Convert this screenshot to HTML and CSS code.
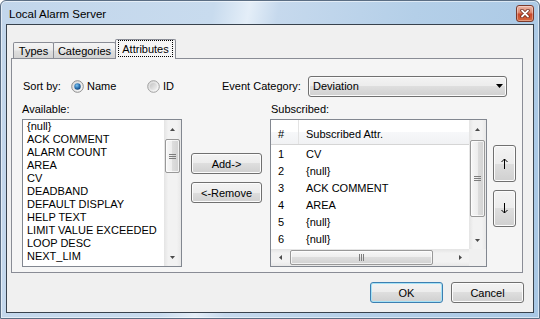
FILE: index.html
```html
<!DOCTYPE html>
<html>
<head>
<meta charset="utf-8">
<title>Local Alarm Server</title>
<link rel="stylesheet" href="styles.css">
</head>
<body>
<div class="window">
  <div class="titlebar">
    <span class="title">Local Alarm Server</span>
    <div class="close">
      <svg width="10" height="9" viewBox="0 0 10 9"><path d="M2 1.5L8 7.5M8 1.5L2 7.5" stroke="#6b2416" stroke-width="3.4" stroke-linecap="round"/><path d="M2 1.5L8 7.5M8 1.5L2 7.5" stroke="#fff" stroke-width="1.8" stroke-linecap="round"/></svg>
    </div>
  </div>
  <div class="client">
    <div class="tabs">
      <div class="tab t1">Types</div>
      <div class="tab t2">Categories</div>
      <div class="tab sel"><span class="focus">Attributes</span></div>
    </div>
    <div class="panel">
      <div class="sortrow">
        <span class="w-sort">Sort by:</span>
        <span class="radio">
          <svg width="13" height="13" viewBox="0 0 13 13"><defs><linearGradient id="rg1" x1="0" y1="0" x2="1" y2="1"><stop offset="0" stop-color="#d6d6d6"/><stop offset="1" stop-color="#fdfdfd"/></linearGradient><radialGradient id="rd1" cx="0.4" cy="0.35" r="0.75"><stop offset="0" stop-color="#7cc4f0"/><stop offset="0.55" stop-color="#2a70b0"/><stop offset="1" stop-color="#0b3768"/></radialGradient></defs><circle cx="6.5" cy="6.5" r="5.8" fill="url(#rg1)" stroke="#8c8c8c"/><circle cx="6.5" cy="6.5" r="3.2" fill="url(#rd1)"/></svg>
        </span>
        <span class="w-name">Name</span>
        <span class="radio">
          <svg width="13" height="13" viewBox="0 0 13 13"><defs><linearGradient id="rg2" x1="0" y1="0" x2="1" y2="1"><stop offset="0" stop-color="#d6d6d6"/><stop offset="1" stop-color="#fdfdfd"/></linearGradient><linearGradient id="rd2" x1="0" y1="0" x2="1" y2="1"><stop offset="0" stop-color="#c4c4c4"/><stop offset="1" stop-color="#f2f2f2"/></linearGradient></defs><circle cx="6.5" cy="6.5" r="5.8" fill="url(#rg2)" stroke="#a0a0a0"/><circle cx="6.5" cy="6.5" r="3.6" fill="url(#rd2)"/></svg>
        </span>
        <span class="w-id">ID</span>
        <span class="w-cat">Event Category:</span>
        <div class="combo">
          <span>Deviation</span>
          <svg class="combo-arrow" width="7" height="4" viewBox="0 0 7 4"><polygon points="0,0 7,0 3.5,4" fill="#000"/></svg>
        </div>
      </div>
      <div class="labelrow">
        <span class="w-avail">Available:</span>
        <span>Subscribed:</span>
      </div>
      <div class="listrow">
        <div class="listbox">
          <ul class="items">
            <li>{null}</li>
            <li>ACK COMMENT</li>
            <li>ALARM COUNT</li>
            <li>AREA</li>
            <li>CV</li>
            <li>DEADBAND</li>
            <li>DEFAULT DISPLAY</li>
            <li>HELP TEXT</li>
            <li>LIMIT VALUE EXCEEDED</li>
            <li>LOOP DESC</li>
            <li>NEXT_LIM</li>
          </ul>
          <div class="vsb">
            <div class="arrow"><svg width="7" height="4" viewBox="0 0 7 4"><polygon points="1,4 6,4 3.5,1" fill="#4a4a4a"/></svg></div>
            <div class="track">
              <div class="vthumb thumb-a"><svg width="7" height="5" viewBox="0 0 7 5"><path d="M0 0.5H7M0 2.5H7M0 4.5H7" stroke="#7d7d7d"/></svg></div>
            </div>
            <div class="arrow"><svg width="7" height="4" viewBox="0 0 7 4"><polygon points="1,0 6,0 3.5,3" fill="#4a4a4a"/></svg></div>
          </div>
        </div>
        <div class="midcol">
          <button class="btn">Add-&gt;</button>
          <button class="btn">&lt;-Remove</button>
        </div>
        <div class="listview">
          <div class="lv-main">
            <div class="lv-body">
              <div class="lv-head">
                <span class="col-n">#</span>
                <span class="col-a">Subscribed Attr.</span>
              </div>
              <div class="lv-row"><span class="n">1</span><span class="a">CV</span></div>
              <div class="lv-row"><span class="n">2</span><span class="a">{null}</span></div>
              <div class="lv-row"><span class="n">3</span><span class="a">ACK COMMENT</span></div>
              <div class="lv-row"><span class="n">4</span><span class="a">AREA</span></div>
              <div class="lv-row"><span class="n">5</span><span class="a">{null}</span></div>
              <div class="lv-row"><span class="n">6</span><span class="a">{null}</span></div>
            </div>
            <div class="vsb">
              <div class="arrow"><svg width="7" height="4" viewBox="0 0 7 4"><polygon points="1,4 6,4 3.5,1" fill="#4a4a4a"/></svg></div>
              <div class="track">
                <div class="vthumb thumb-b"><svg width="7" height="5" viewBox="0 0 7 5"><path d="M0 0.5H7M0 2.5H7M0 4.5H7" stroke="#7d7d7d"/></svg></div>
              </div>
              <div class="arrow"><svg width="7" height="4" viewBox="0 0 7 4"><polygon points="1,0 6,0 3.5,3" fill="#4a4a4a"/></svg></div>
            </div>
          </div>
          <div class="lv-bottom">
            <div class="hsb">
              <div class="harrow"><svg width="4" height="7" viewBox="0 0 4 7"><polygon points="4,1 4,6 1,3.5" fill="#4a4a4a"/></svg></div>
              <div class="htrack">
                <div class="hthumb"><svg width="5" height="7" viewBox="0 0 5 7"><path d="M0.5 0V7M2.5 0V7M4.5 0V7" stroke="#7d7d7d"/></svg></div>
              </div>
              <div class="harrow"><svg width="4" height="7" viewBox="0 0 4 7"><polygon points="0,1 0,6 3,3.5" fill="#4a4a4a"/></svg></div>
            </div>
            <div class="corner"></div>
          </div>
        </div>
        <div class="updown">
          <button class="btn tall"><svg width="7" height="11" viewBox="0 0 7 11"><path d="M3.5 1V11M0.5 4L3.5 1L6.5 4" stroke="#000" fill="none"/></svg></button>
          <button class="btn tall"><svg width="7" height="11" viewBox="0 0 7 11"><path d="M3.5 0V10M0.5 7L3.5 10L6.5 7" stroke="#000" fill="none"/></svg></button>
        </div>
      </div>
    </div>
    <div class="footer">
      <button class="btn fbtn def">OK</button>
      <button class="btn fbtn">Cancel</button>
    </div>
  </div>
</div>
</body>
</html>
```

FILE: styles.css
```css
* { box-sizing: border-box; margin: 0; padding: 0; }
html, body { width: 540px; height: 319px; overflow: hidden; }
body {
  font-family: "Liberation Sans", Arial, sans-serif;
  font-size: 11px;
  color: #000;
  background: #fff;
}

.window {
  width: 540px;
  height: 319px;
  border: 1px solid #5b6e84;
  border-radius: 6px 6px 0 0;
  background: linear-gradient(100deg, #c2d6eb 0%, #c8dbee 36%, #e4eef8 42%, #c6d9ed 47%, #b4cfe8 70%, #a9c8e5 100%);
  box-shadow: inset 0 0 0 1px rgba(255, 255, 255, 0.55);
  padding: 0 5px 5px;
  display: flex;
  flex-direction: column;
}

.titlebar {
  height: 23px;
  display: flex;
  align-items: flex-start;
  flex: none;
}
.title {
  font-size: 11.5px;
  line-height: 14px;
  padding: 6px 0 0 3px;
}
.close {
  margin-left: auto;
  margin-top: 4px;
  width: 18px;
  height: 17px;
  border: 1px solid #7b3a2c;
  border-radius: 3px;
  background: linear-gradient(#ebb4a5 0%, #de8c74 42%, #c9472b 55%, #d4693f 100%);
  box-shadow: inset 0 0 0 1px rgba(255, 255, 255, 0.35);
  display: flex;
  align-items: center;
  justify-content: center;
}

.client {
  flex: 1;
  border: 1px solid #38424d;
  background: #f0f0f0;
  padding: 17px 10px 0 4px;
  display: flex;
  flex-direction: column;
}

.tabs {
  height: 16px;
  flex: none;
  display: flex;
  align-items: flex-end;
  padding-left: 2px;
  position: relative;
  z-index: 1;
}
.tab {
  height: 16px;
  border: 1px solid #898c95;
  border-bottom: 0;
  border-radius: 2px 2px 0 0;
  background: linear-gradient(#f5f5f5 0%, #ececec 45%, #dedede 55%, #d3d3d3 100%);
  display: flex;
  align-items: center;
  justify-content: center;
  padding-top: 1px;
}
.tab + .tab { margin-left: -1px; }
.t1 { width: 41px; }
.t2 { width: 63px; }
.tab.sel {
  width: 61px;
  height: 20px;
  margin-bottom: -1px;
  background: #f5f5f5;
  padding: 0 2px 2px 2px;
  align-items: stretch;
}
.focus {
  flex: 1;
  border: 1px dotted #000;
  display: flex;
  align-items: center;
  justify-content: center;
}

.panel {
  height: 215px;
  flex: none;
  border: 1px solid #898c95;
  background: #f5f5f5;
  display: flex;
  flex-direction: column;
}

.sortrow {
  margin-top: 16px;
  height: 22px;
  display: flex;
  align-items: center;
  padding-left: 11px;
}
.w-sort { width: 48px; }
.radio { width: 13px; height: 13px; margin-right: 3px; display: flex; }
.w-name { width: 60px; }
.w-id { width: 59px; }
.w-cat { width: 86px; }

.combo {
  width: 199px;
  height: 21px;
  border: 1px solid #707070;
  border-radius: 3px;
  background: linear-gradient(#f3f3f3 0%, #ececec 50%, #dedede 50%, #d0d0d0 100%);
  box-shadow: inset 0 0 0 1px #fbfbfb;
  display: flex;
  align-items: center;
  padding-left: 4px;
}
.combo-arrow { margin-left: auto; margin-right: 3px; }

.labelrow {
  margin-top: 4px;
  height: 15px;
  display: flex;
  align-items: center;
  padding-left: 10px;
}
.w-avail { width: 249px; }

.listrow {
  margin-top: 3px;
  display: flex;
  align-items: flex-start;
  padding-left: 10px;
}

.listbox {
  width: 160px;
  height: 148px;
  border: 1px solid #828790;
  background: #fff;
  display: flex;
}
.items {
  flex: 1;
  list-style: none;
  padding-left: 4px;
  overflow: hidden;
}
.items li {
  height: 13px;
  line-height: 13px;
  white-space: nowrap;
}

.vsb {
  width: 17px;
  flex: none;
  display: flex;
  flex-direction: column;
  background: linear-gradient(to right, #e4e4e4, #f2f2f2 25%, #f2f2f2 75%, #e8e8e8);
}
.arrow {
  height: 17px;
  flex: none;
  display: flex;
  align-items: center;
  justify-content: center;
}
.track {
  flex: 1;
  display: flex;
  flex-direction: column;
  align-items: center;
}
.vthumb {
  width: 15px;
  border: 1px solid #989898;
  border-radius: 2px;
  background: linear-gradient(to right, #f7f7f7 0%, #ededed 50%, #dddddd 50%, #d2d2d2 100%);
  box-shadow: inset 0 0 0 1px rgba(255, 255, 255, 0.7);
  display: flex;
  align-items: center;
  justify-content: center;
}
.thumb-a { margin-top: 2px; height: 34px; }
.thumb-b { margin-top: 3px; height: 77px; }

.midcol {
  margin-left: 9px;
  width: 71px;
  padding-top: 34px;
  display: flex;
  flex-direction: column;
  gap: 8px;
}

.btn {
  height: 21px;
  border: 1px solid #707070;
  border-radius: 3px;
  background: linear-gradient(#f3f3f3 0%, #ececec 50%, #dedede 50%, #d0d0d0 100%);
  box-shadow: inset 0 0 0 1px #fcfcfc;
  font: inherit;
  color: #000;
  display: flex;
  align-items: center;
  justify-content: center;
}
.btn.tall { height: 37px; }

.listview {
  margin-left: 8px;
  width: 217px;
  height: 148px;
  border: 1px solid #828790;
  background: #fff;
  display: flex;
  flex-direction: column;
}
.lv-main {
  flex: 1;
  min-height: 0;
  display: flex;
}
.lv-body { flex: 1; overflow: hidden; }
.lv-head {
  height: 25px;
  display: flex;
  border-bottom: 1px solid #d5d5d5;
  background: linear-gradient(#ffffff 0%, #ffffff 50%, #f7f8fa 50%, #f1f2f4 100%);
}
.col-n {
  width: 28px;
  padding: 3px 0 0 7px;
  border-right: 1px solid #e3e3e3;
  display: flex;
  align-items: center;
}
.col-a {
  padding: 3px 0 0 7px;
  display: flex;
  align-items: center;
}
.lv-row {
  height: 17px;
  display: flex;
  align-items: center;
  white-space: nowrap;
}
.lv-row .n { width: 28px; padding-left: 7px; }
.lv-row .a { padding-left: 7px; }

.lv-bottom {
  height: 17px;
  flex: none;
  display: flex;
}
.hsb {
  flex: 1;
  display: flex;
  background: linear-gradient(#e4e4e4, #f2f2f2 25%, #f2f2f2 75%, #e8e8e8);
}
.harrow {
  width: 17px;
  flex: none;
  display: flex;
  align-items: center;
  justify-content: center;
}
.htrack {
  flex: 1;
  display: flex;
  align-items: center;
}
.hthumb {
  width: 143px;
  height: 15px;
  margin-left: 2px;
  border: 1px solid #989898;
  border-radius: 2px;
  background: linear-gradient(#f7f7f7 0%, #ededed 50%, #dddddd 50%, #d2d2d2 100%);
  box-shadow: inset 0 0 0 1px rgba(255, 255, 255, 0.7);
  display: flex;
  align-items: center;
  justify-content: center;
}
.corner { width: 17px; background: #f0f0f0; }

.updown {
  margin-left: 6px;
  width: 23px;
  padding-top: 26px;
  display: flex;
  flex-direction: column;
  gap: 8px;
}

.footer {
  margin-top: 9px;
  margin-right: -1px;
  display: flex;
  justify-content: flex-end;
  gap: 8px;
}
.fbtn { width: 73px; }
.btn.def {
  border-color: #3c7fb1;
  box-shadow: inset 0 0 0 1px #a6e2f6;
}
```
